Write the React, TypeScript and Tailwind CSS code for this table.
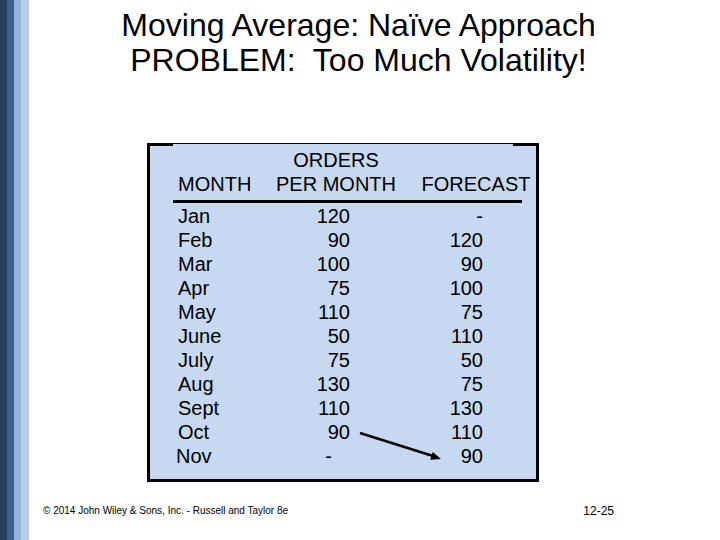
const rows = [
  { m: 'Jan', o: '120', f: '-' },
  { m: 'Feb', o: '90', f: '120' },
  { m: 'Mar', o: '100', f: '90' },
  { m: 'Apr', o: '75', f: '100' },
  { m: 'May', o: '110', f: '75' },
  { m: 'June', o: '50', f: '110' },
  { m: 'July', o: '75', f: '50' },
  { m: 'Aug', o: '130', f: '75' },
  { m: 'Sept', o: '110', f: '130' },
  { m: 'Oct', o: '90', f: '110' },
  { m: 'Nov', o: '-', f: '90' },
]

export default function App() {
  return (
    <div className="flex w-[720px] h-[540px] bg-white text-black font-['Liberation_Sans',Arial,sans-serif] overflow-hidden">
      {/* left stripes */}
      <div className="flex h-full shrink-0">
        <div className="w-[7px] bg-[#26405f]" />
        <div className="w-[7px] bg-[#3a6094]" />
        <div className="w-[7px] bg-[#95b2d8]" />
        <div className="w-[8px] bg-[#b8cce4]" />
      </div>

      <div className="flex-1 flex flex-col">
        <h1 className="pt-[8px] pr-[32px] text-center text-[32px] leading-[35px] font-normal whitespace-pre">
          {'Moving Average: Naïve Approach\nPROBLEM:  Too Much Volatility!'}
        </h1>

        {/* table box */}
        <div className="relative mt-[65px] ml-[118px] w-[392px] border-[3px] border-t border-black bg-[#c6d9f1] pt-[4px] pb-[11px] text-[20px] leading-[24px]">
          <span className="absolute -top-px -left-[3px] w-[26px] h-[3px] bg-black" />
          <span className="absolute -top-px -right-[3px] w-[26px] h-[3px] bg-black" />

          <div className="flex">
            <div className="w-[126px] pl-[28px] pt-[24px]">MONTH</div>
            <div className="w-[120px] text-center">ORDERS<br />PER MONTH</div>
            <div className="w-[21px]" />
            <div className="w-[118px] text-center pt-[24px]">FORECAST</div>
          </div>
          <div className="mt-[4px] mb-[1px] ml-[23px] w-[349px] h-[3px] bg-black" />

          {rows.map((r) => (
            <div key={r.m} className="flex">
              <div className={`w-[120px] ${r.m === 'Nov' ? 'pl-[26px]' : 'pl-[28px]'}`}>{r.m}</div>
              <div className={`w-[80px] text-right ${r.o === '-' ? 'pr-[18px]' : ''}`}>{r.o}</div>
              <div className="w-[133px] text-right">{r.f}</div>
            </div>
          ))}

          <svg className="absolute left-0 top-0 pointer-events-none" width="386" height="336">
            <line x1="210" y1="289" x2="283" y2="312" stroke="black" strokeWidth="2.5" />
            <polygon points="291,315 280.3,315.7 282.7,308.1" fill="black" />
          </svg>
        </div>

        <div className="mt-auto mb-[22px] flex items-center">
          <div className="ml-[14px] text-[10px] leading-[12px]">© 2014 John Wiley &amp; Sons, Inc. - Russell and Taylor 8e</div>
          <div className="ml-auto mr-[106px] text-[12px] leading-[14px]">12-25</div>
        </div>
      </div>
    </div>
  )
}
